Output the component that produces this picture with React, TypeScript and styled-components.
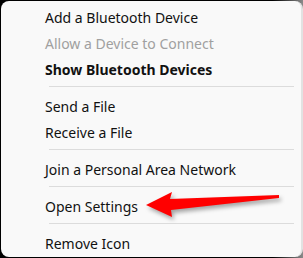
import React from "react";
import styled, { createGlobalStyle } from "styled-components";

const GlobalStyle = createGlobalStyle`
  html, body {
    margin: 0;
    padding: 0;
    background: #000;
  }
  body {
    font-family: "Noto Sans", "Open Sans", sans-serif;
  }
`;

const Frame = styled.div`
  position: relative;
  width: 303px;
  height: 258px;
  box-sizing: border-box;
  padding: 1px 0 1px 1px;
  background: linear-gradient(90deg, #000 0%, #000 90%, #8a8a8a 100%);
`;

const Menu = styled.ul`
  list-style: none;
  margin: 0;
  height: 100%;
  box-sizing: border-box;
  padding: 3px 7px 0 0;
  background: #f9f9f9;
  border-radius: 8px;
  border-right: 2px solid #e2e2e2;
`;

const Item = styled.li<{ $disabled?: boolean; $bold?: boolean }>`
  height: 26px;
  display: flex;
  align-items: center;
  padding-left: 44px;
  font-size: 14px;
  color: ${(p) => (p.$disabled ? "#a0a0a0" : "#111")};
  font-weight: ${(p) => (p.$bold ? 700 : 400)};
  white-space: nowrap;
`;

const Separator = styled.li`
  height: 1px;
  margin: 4px 0 6px 48px;
  background: #dcdcdc;
`;

const Arrow = styled.svg`
  position: absolute;
  left: 140px;
  top: 186px;
  overflow: visible;
  filter: drop-shadow(2px 3px 2px rgba(0, 0, 0, 0.35));
`;

export default function App() {
  return (
    <>
      <GlobalStyle />
      <Frame>
        <Menu>
          <Item>Add a Bluetooth Device</Item>
          <Item $disabled>Allow a Device to Connect</Item>
          <Item $bold>Show Bluetooth Devices</Item>
          <Separator />
          <Item>Send a File</Item>
          <Item>Receive a File</Item>
          <Separator />
          <Item>Join a Personal Area Network</Item>
          <Separator />
          <Item>Open Settings</Item>
          <Separator />
          <Item>Remove Icon</Item>
        </Menu>
        <Arrow width="145" height="36" viewBox="140 186 145 36">
          <polygon
            points="146,205 172,192 170,199 279,195 279,198 171,210 172,217"
            fill="#ff0000"
          />
        </Arrow>
      </Frame>
    </>
  );
}
